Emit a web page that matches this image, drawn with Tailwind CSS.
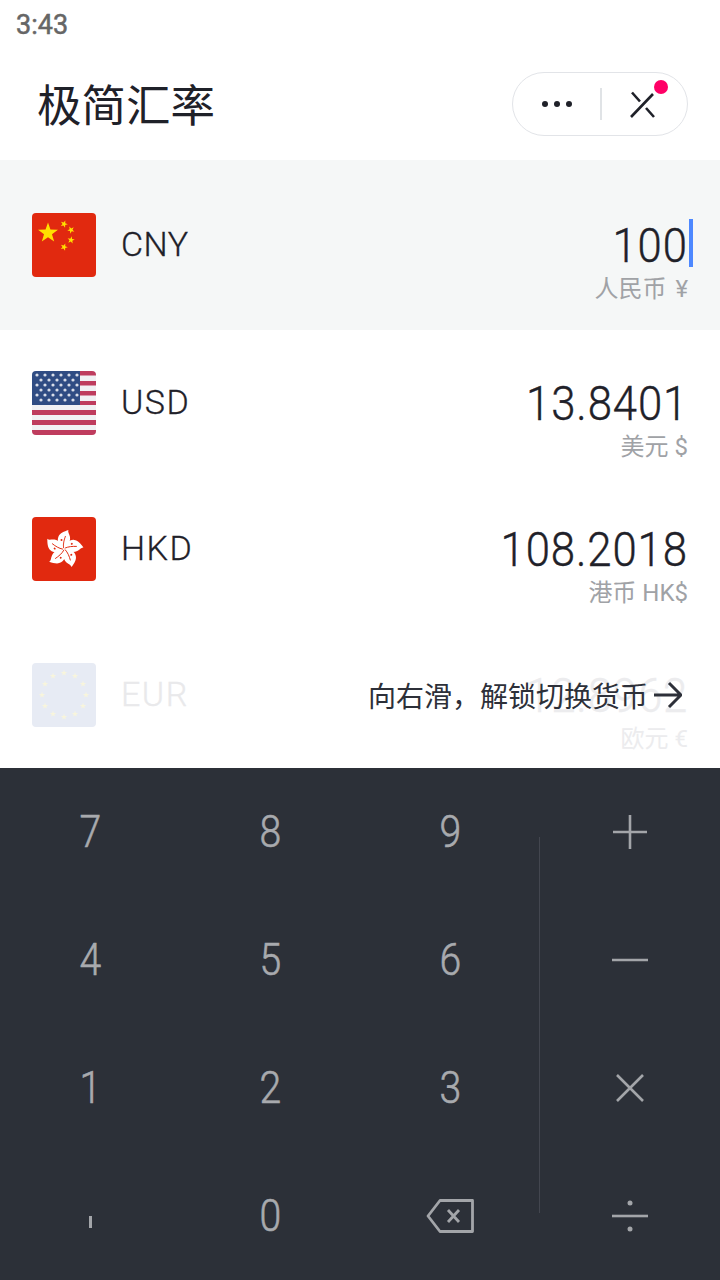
<!DOCTYPE html>
<html><head><meta charset="utf-8"><script src="https://cdn.jsdelivr.net/npm/@tailwindcss/browser@4"></script></head>
<body class="m-0 bg-white">
<svg width="0" height="0" class="absolute"><defs>
  <polygon id="star" points="0,-10 2.35,-3.24 9.51,-3.09 3.8,1.24 5.88,8.09 0,4 -5.88,8.09 -3.8,1.24 -9.51,-3.09 -2.35,-3.24"/>
  <g id="petal"><path fill="#fff" d="M31.5 32C27 29 24.5 24 26.5 19.5 28 16 32 14.5 36.5 13 35.5 15 37.5 17 38 20 38.7 25 35.5 29 31.5 32Z"/><path fill="none" stroke="#e1290f" stroke-width="0.9" d="M31.5 31C31 27 32 23 33.5 19"/><circle cx="29.5" cy="23" r="1" fill="#e1290f"/></g>
</defs></svg>
<div class="w-[720px] h-[1280px] overflow-hidden flex flex-col bg-white font-['Roboto','Noto_Sans_CJK_SC',sans-serif] text-[#1f2129]">
  <div class="h-[50px] pl-4 pt-[7px] text-[27px] leading-9 font-normal text-[#666666] font-['Roboto'] [-webkit-text-stroke:0.5px_#666666]">3:43</div>
  <div class="h-[110px] flex items-start justify-between pl-[37px] pr-8">
    <div class="mt-[20px] text-[44.5px] leading-[66px] font-['Noto_Sans_CJK_SC'] font-normal">极简汇率</div>
    <div class="relative mt-[22px] w-[176px] h-[64px] rounded-full border border-[#e2e4e8] flex items-center">
      <div class="w-[87px] flex justify-center gap-[6px]"><i class="w-[6px] h-[6px] rounded-full bg-[#1f2129]"></i><i class="w-[6px] h-[6px] rounded-full bg-[#1f2129]"></i><i class="w-[6px] h-[6px] rounded-full bg-[#1f2129]"></i></div>
      <div class="w-[2px] h-8 bg-[#e0e3e6]"></div>
      <div class="flex-1 flex justify-center pr-[3px]">
        <svg width="28" height="28" viewBox="0 0 28 28" fill="none" stroke="#1f2129" stroke-width="2.6"><path d="M3 2.5 11 11.5M17 18 25 27M2 27 24 4"/></svg>
      </div>
      <div class="absolute top-[7px] right-[19px] w-[14px] h-[14px] rounded-full bg-[#ff0066]"></div>
    </div>
  </div>

  <div class="h-[170px] bg-[#f5f7f7] flex items-center pl-8 pr-8">
    <svg class="rounded-[4px] shrink-0" width="64" height="64" viewBox="0 0 64 64"><rect width="64" height="64" fill="#e1290f"/><g fill="#ffe000"><use href="#star" transform="translate(16 20) scale(1.05)"/><use href="#star" transform="translate(32 11) rotate(20) scale(.38)"/><use href="#star" transform="translate(39 17) rotate(45) scale(.38)"/><use href="#star" transform="translate(39 27) rotate(10) scale(.38)"/><use href="#star" transform="translate(32 34) rotate(20) scale(.38)"/></g></svg>
    <div class="ml-[25px] -mt-[2px] text-[34px] tracking-[0.5px] font-light [-webkit-text-stroke:0.3px_#1f2129]">CNY</div>
    <div class="ml-auto flex flex-col items-end mt-[32px]">
      <div class="relative text-[48px] leading-[56px] font-light tracking-[1px] [-webkit-text-stroke:0.4px_#1f2129]"><span class="block origin-right scale-x-[0.91]">100</span><span class="absolute -right-[5px] top-[1px] w-1 h-12 bg-[#4d88ff]"></span></div>
      <div class="text-[24px] leading-[30px] text-[#a0a2a6] font-normal"><span class="mr-[3px]">人民币</span> ¥</div>
    </div>
  </div>

  <div class="h-[146px] flex items-center pl-8 pr-8">
    <svg class="rounded-[4px] shrink-0" width="64" height="64" viewBox="0 0 64 64"><rect width="64" height="64" fill="#f1f1f4"/><g fill="#bf3c5e"><rect x="48" y="0" width="16" height="4.5"/><rect x="48" y="10" width="16" height="4.5"/><rect x="48" y="20" width="16" height="4.5"/><rect x="48" y="30" width="16" height="4"/><rect y="39" width="64" height="5"/><rect y="49" width="64" height="5"/><rect y="59" width="64" height="5"/></g><rect width="48" height="34" fill="#2f4c83"/><g fill="#d8dde8"><circle cx="5" cy="4" r="1.6"/><circle cx="13" cy="4" r="1.6"/><circle cx="21" cy="4" r="1.6"/><circle cx="29" cy="4" r="1.6"/><circle cx="37" cy="4" r="1.6"/><circle cx="45" cy="4" r="1.6"/><circle cx="9" cy="9" r="1.6"/><circle cx="17" cy="9" r="1.6"/><circle cx="25" cy="9" r="1.6"/><circle cx="33" cy="9" r="1.6"/><circle cx="41" cy="9" r="1.6"/><circle cx="5" cy="14" r="1.6"/><circle cx="13" cy="14" r="1.6"/><circle cx="21" cy="14" r="1.6"/><circle cx="29" cy="14" r="1.6"/><circle cx="37" cy="14" r="1.6"/><circle cx="45" cy="14" r="1.6"/><circle cx="9" cy="19" r="1.6"/><circle cx="17" cy="19" r="1.6"/><circle cx="25" cy="19" r="1.6"/><circle cx="33" cy="19" r="1.6"/><circle cx="41" cy="19" r="1.6"/><circle cx="5" cy="24" r="1.6"/><circle cx="13" cy="24" r="1.6"/><circle cx="21" cy="24" r="1.6"/><circle cx="29" cy="24" r="1.6"/><circle cx="37" cy="24" r="1.6"/><circle cx="45" cy="24" r="1.6"/><circle cx="9" cy="29" r="1.6"/><circle cx="17" cy="29" r="1.6"/><circle cx="25" cy="29" r="1.6"/><circle cx="33" cy="29" r="1.6"/><circle cx="41" cy="29" r="1.6"/></g></svg>
    <div class="ml-[25px] -mt-[2px] text-[34px] tracking-[1.5px] font-light [-webkit-text-stroke:0.3px_#1f2129]">USD</div>
    <div class="ml-auto flex flex-col items-end mt-[32px]">
      <div class="text-[48px] leading-[56px] font-light tracking-[1px] [-webkit-text-stroke:0.4px_#1f2129]"><span class="block origin-right scale-x-[0.91]">13.8401</span></div>
      <div class="text-[24px] leading-[30px] text-[#a0a2a6] font-normal">美元 $</div>
    </div>
  </div>

  <div class="h-[146px] flex items-center pl-8 pr-8">
    <svg class="rounded-[4px] shrink-0" width="64" height="64" viewBox="0 0 64 64"><rect width="64" height="64" fill="#e1290f"/><use href="#petal"/><use href="#petal" transform="rotate(72 32 32)"/><use href="#petal" transform="rotate(144 32 32)"/><use href="#petal" transform="rotate(216 32 32)"/><use href="#petal" transform="rotate(288 32 32)"/></svg>
    <div class="ml-[25px] -mt-[2px] text-[34px] tracking-[1.5px] font-light [-webkit-text-stroke:0.3px_#1f2129]">HKD</div>
    <div class="ml-auto flex flex-col items-end mt-[32px]">
      <div class="text-[48px] leading-[56px] font-light tracking-[1px] [-webkit-text-stroke:0.4px_#1f2129]"><span class="block origin-right scale-x-[0.91]">108.2018</span></div>
      <div class="text-[24px] leading-[30px] text-[#a0a2a6] font-normal">港币 HK$</div>
    </div>
  </div>

  <div class="relative h-[146px] flex items-center pl-8 pr-8">
    <svg class="rounded-[4px] shrink-0" width="64" height="64" viewBox="0 0 64 64"><rect width="64" height="64" fill="#e7ebf4"/><g fill="#f8f5dc"><use href="#star" transform="translate(32 10) scale(.32)"/><use href="#star" transform="translate(43 13) scale(.32)"/><use href="#star" transform="translate(51 21) scale(.32)"/><use href="#star" transform="translate(54 32) scale(.32)"/><use href="#star" transform="translate(51 43) scale(.32)"/><use href="#star" transform="translate(43 51) scale(.32)"/><use href="#star" transform="translate(32 54) scale(.32)"/><use href="#star" transform="translate(21 51) scale(.32)"/><use href="#star" transform="translate(13 43) scale(.32)"/><use href="#star" transform="translate(10 32) scale(.32)"/><use href="#star" transform="translate(13 21) scale(.32)"/><use href="#star" transform="translate(21 13) scale(.32)"/></g></svg>
    <div class="ml-[25px] -mt-[2px] text-[34px] tracking-[1.5px] font-light text-[#e9e9eb] [-webkit-text-stroke:0.3px_#e9e9eb]">EUR</div>
    <div class="ml-auto flex flex-col items-end mt-[32px] text-[#ececee]">
      <div class="text-[48px] leading-[56px] font-light tracking-[1px] [-webkit-text-stroke:0.4px_#ececee]"><span class="block origin-right scale-x-[0.91]">12.8962</span></div>
      <div class="text-[24px] leading-[30px] font-normal">欧元 €</div>
    </div>
    <div class="absolute left-[368px] top-[55px] flex items-center text-[28px] leading-9 text-[#2d3039] font-['Noto_Sans_CJK_SC'] font-normal">向右滑，解锁切换货币<svg class="ml-[6px]" width="28" height="28" viewBox="0 0 28 28" fill="none" stroke="#2d3039" stroke-width="3"><path d="M0 14H26M15 2 27 14 15 26"/></svg></div>
  </div>

  <div class="relative flex-1 bg-[#2c3038] grid grid-cols-4 grid-rows-4 text-[#a8aaae] text-[45px] font-light [-webkit-text-stroke:0.6px_#a8aaae]">
    <div class="flex items-center justify-center"><span class="scale-x-[0.87]">7</span></div><div class="flex items-center justify-center"><span class="scale-x-[0.87]">8</span></div><div class="flex items-center justify-center"><span class="scale-x-[0.87]">9</span></div>
    <div class="flex items-center justify-center"><svg width="34" height="34" viewBox="0 0 34 34" stroke="#a3a5a9" stroke-width="2.6"><path d="M0 17H34M17 0V34"/></svg></div>
    <div class="flex items-center justify-center"><span class="scale-x-[0.87]">4</span></div><div class="flex items-center justify-center"><span class="scale-x-[0.87]">5</span></div><div class="flex items-center justify-center"><span class="scale-x-[0.87]">6</span></div>
    <div class="flex items-center justify-center"><svg width="36" height="4" viewBox="0 0 36 4" stroke="#a3a5a9" stroke-width="2.6"><path d="M0 2H36"/></svg></div>
    <div class="flex items-center justify-center"><span class="scale-x-[0.87]">1</span></div><div class="flex items-center justify-center"><span class="scale-x-[0.87]">2</span></div><div class="flex items-center justify-center"><span class="scale-x-[0.87]">3</span></div>
    <div class="flex items-center justify-center"><svg width="28" height="28" viewBox="0 0 28 28" stroke="#a3a5a9" stroke-width="2.6"><path d="M1 1 27 27M27 1 1 27"/></svg></div>
    <div class="flex items-center justify-center"><i class="block w-[3px] h-3 mt-[11px] bg-[#a3a5a9]"></i></div><div class="flex items-center justify-center"><span class="scale-x-[0.87]">0</span></div>
    <div class="flex items-center justify-center"><svg width="48" height="34" viewBox="0 0 48 34" fill="none" stroke="#a3a5a9" stroke-width="2.8" stroke-linejoin="round"><path d="M14 1.5H46.5V32.5H14L2 17ZM22 11 33 23M33 11 22 23"/></svg></div>
    <div class="flex items-center justify-center"><svg width="36" height="32" viewBox="0 0 36 32" fill="#a3a5a9"><rect y="14.7" width="36" height="2.6"/><circle cx="18" cy="3" r="2.5"/><circle cx="18" cy="29" r="2.5"/></svg></div>
    <div class="absolute left-[539px] top-[69px] w-px h-[376px] bg-[#43464f]"></div>
  </div>
</div>
</body></html>
